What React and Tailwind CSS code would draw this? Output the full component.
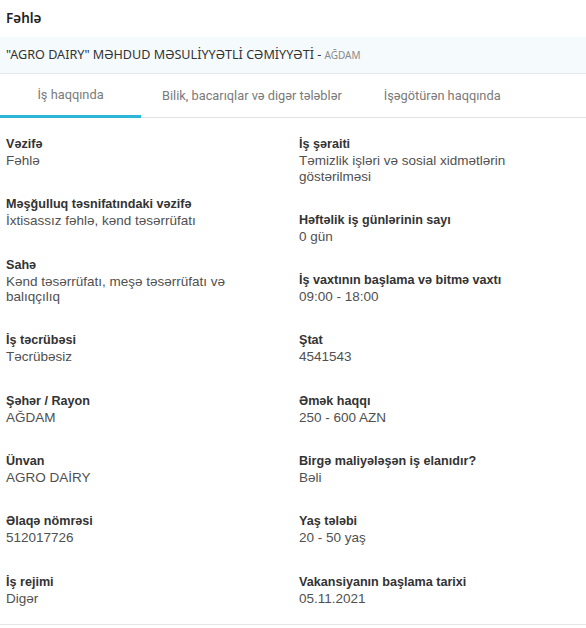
const left = [
  { label: 'Vəzifə', value: 'Fəhlə' },
  { label: 'Məşğulluq təsnifatındaki vəzifə', value: 'İxtisassız fəhlə, kənd təsərrüfatı' },
  { label: 'Sahə', value: 'Kənd təsərrüfatı, meşə təsərrüfatı və balıqçılıq' },
  { label: 'İş təcrübəsi', value: 'Təcrübəsiz' },
  { label: 'Şəhər / Rayon', value: 'AĞDAM' },
  { label: 'Ünvan', value: 'AGRO DAİRY' },
  { label: 'Əlaqə nömrəsi', value: '512017726' },
  { label: 'İş rejimi', value: 'Digər' },
];

const right = [
  { label: 'İş şəraiti', value: 'Təmizlik işləri və sosial xidmətlərin göstərilməsi' },
  { label: 'Həftəlik iş günlərinin sayı', value: '0 gün' },
  { label: 'İş vaxtının başlama və bitmə vaxtı', value: '09:00 - 18:00' },
  { label: 'Ştat', value: '4541543' },
  { label: 'Əmək haqqı', value: '250 - 600 AZN' },
  { label: 'Birgə maliyələşən iş elanıdır?', value: 'Bəli' },
  { label: 'Yaş tələbi', value: '20 - 50 yaş' },
  { label: 'Vakansiyanın başlama tarixi', value: '05.11.2021' },
];

function Field({ label, value }) {
  return (
    <div className="mb-[26.8px] last:mb-0">
      <div className="text-[12.6px] leading-[18px] font-bold text-[#333333]">{label}</div>
      <div className="text-[13.5px] leading-[15.5px] text-[#505050] max-w-[260px]">{value}</div>
    </div>
  );
}

export default function App() {
  return (
    <div className="w-[586px] bg-white">
      <div className="h-[37px] flex items-center px-[6px] text-[13.5px] font-semibold text-[#222222] font-['Noto_Sans',sans-serif]">
        Fəhlə
      </div>
      <div className="h-[37px] flex items-center px-[6px] bg-[#f5fafd] border-b border-[#e6e9eb] font-['Noto_Sans',sans-serif] text-[12.6px] text-[#333333]">
        "AGRO DAIRY" MƏHDUD MƏSULİYYƏTLİ CƏMİYYƏTİ -&nbsp;<span className="text-[10px] text-[#8a8a8a]">AĞDAM</span>
      </div>
      <div className="flex h-[44px] border-b border-[#e3e3e3] font-['Roboto',sans-serif] text-[12.8px] text-[#7a7a7a]">
        <div className="w-[141px] flex items-center justify-center border-b-[3px] border-[#2bb5d8] -mb-px">
          İş haqqında
        </div>
        <div className="px-[21px] flex items-center">Bilik, bacarıqlar və digər tələblər</div>
        <div className="px-[21px] flex items-center">İşəgötürən haqqında</div>
      </div>
      <div className="grid grid-cols-2 pt-[17px] pb-[17.5px] border-b border-[#e6e6e6] font-['Liberation_Sans',Arial,sans-serif]">
        <div className="pl-[6px]">
          {left.map((f) => (
            <Field key={f.label} {...f} />
          ))}
        </div>
        <div className="pl-[6px]">
          {right.map((f) => (
            <Field key={f.label} {...f} />
          ))}
        </div>
      </div>
    </div>
  );
}
